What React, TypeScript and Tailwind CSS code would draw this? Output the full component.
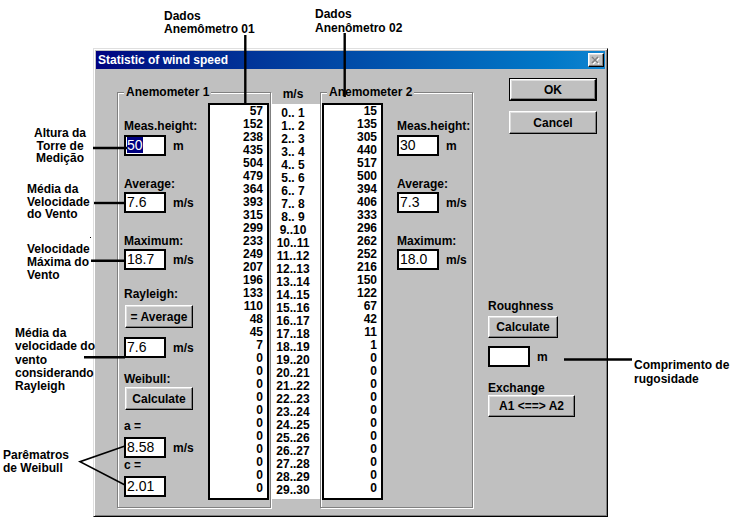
import React from 'react'

const A1 = [57, 152, 238, 435, 504, 479, 364, 393, 315, 299, 233, 249, 207, 196, 133, 110, 48, 45, 7, 0, 0, 0, 0, 0, 0, 0, 0, 0, 0, 0]
const A2 = [15, 135, 305, 440, 517, 500, 394, 406, 333, 296, 262, 252, 216, 150, 122, 67, 42, 11, 1, 0, 0, 0, 0, 0, 0, 0, 0, 0, 0, 0]
const BINS = Array.from({ length: 30 }, (_, i) => (i < 9 ? `${i}.. ${i + 1}` : `${i}..${i + 1}`))

const raised =
  'border border-t-white border-l-white border-r-black border-b-black bg-[#c0c0c0] shadow-[inset_-1px_-1px_0_#808080,inset_1px_1px_0_#dfdfdf]'

function Btn({ className, children }: { className: string; children: React.ReactNode }) {
  return <div className={`${raised} flex items-center justify-center leading-[14px] ${className}`}>{children}</div>
}

function Field({ value, selected }: { value: string; selected?: boolean }) {
  return (
    <div className="h-[21px] w-[42px] border-2 border-black bg-white pl-[1px] pt-[1px] text-[14px] font-normal leading-[14px]">
      {selected ? <span className="bg-[#000080] text-white">{value}</span> : value}
    </div>
  )
}

function FieldRow({ className, value, unit, selected }: { className: string; value: string; unit?: string; selected?: boolean }) {
  return (
    <div className={`flex items-center gap-[7px] ${className}`}>
      <Field value={value} selected={selected} />
      {unit && <span className="leading-[14px]">{unit}</span>}
    </div>
  )
}

function ListBox({ values }: { values: number[] }) {
  return (
    <div className="h-[397px] w-[61px] border-2 border-black bg-white pr-[4px] text-right">
      {values.map((v, i) => (
        <div key={i} className="h-[13px] leading-[13px]">
          {v}
        </div>
      ))}
    </div>
  )
}

function Group({ title, className, children }: { title: string; className: string; children: React.ReactNode }) {
  return (
    <div className={`relative flex h-[416px] border border-[#808080] shadow-[inset_1px_1px_0_#fff,1px_1px_0_#fff] ${className}`}>
      <span className="absolute -top-[8px] left-[6px] bg-[#c0c0c0] px-[2px] leading-[14px]">{title}</span>
      {children}
    </div>
  )
}

function Note({ className, children }: { className: string; children: React.ReactNode }) {
  return <div className={`absolute whitespace-pre font-bold text-black ${className}`}>{children}</div>
}

export default function App() {
  return (
    <div className="relative h-[521px] w-[739px] overflow-hidden bg-white pl-[93px] pt-[48px] font-['Liberation_Sans',Arial,sans-serif] text-[12px] font-bold text-black">
      {/* dialog window */}
      <div className="h-[469px] w-[515px] border border-t-[#dfdfdf] border-l-[#dfdfdf] border-r-black border-b-black bg-[#c0c0c0] p-[2px] shadow-[inset_1px_1px_0_#fff,inset_-1px_-1px_0_#808080]">
        <div className="flex h-[18px] items-center justify-between bg-linear-to-r from-[#000080] to-[#1084d0] pl-[2px] pr-[1px]">
          <span className="text-white">Statistic of wind speed</span>
          <div className={`${raised} flex h-[14px] w-[16px] items-center justify-center`}>
            <svg width="10" height="9" viewBox="0 0 10 9">
              <path d="M2 2 L8 8 M8 2 L2 8" stroke="#fff" strokeWidth="1.6" />
              <path d="M1 1 L7 7 M7 1 L1 7" stroke="#808080" strokeWidth="1.6" />
            </svg>
          </div>
        </div>

        <div className="flex h-[446px]">
          <div className="pl-[21px] pt-[23px]">
            <Group title="Anemometer 1" className="w-[154px]">
              <div className="flex-1 pl-[6px]">
                <div className="mt-[26px] leading-[14px]">Meas.height:</div>
                <FieldRow className="mt-[2px]" value="50" unit="m" selected />
                <div className="mt-[21px] leading-[14px]">Average:</div>
                <FieldRow className="mt-[1px]" value="7.6" unit="m/s" />
                <div className="mt-[21px] leading-[14px]">Maximum:</div>
                <FieldRow className="mt-[1px]" value="18.7" unit="m/s" />
                <div className="mt-[17px] leading-[14px]">Rayleigh:</div>
                <Btn className="ml-[1px] mt-[4px] h-[23px] w-[68px]">= Average</Btn>
                <FieldRow className="mt-[9px]" value="7.6" unit="m/s" />
                <div className="mt-[14px] leading-[14px]">Weibull:</div>
                <Btn className="ml-[1px] mt-[1px] h-[23px] w-[68px]">Calculate</Btn>
                <div className="mt-[9px] leading-[14px]">a =</div>
                <FieldRow className="mt-[4px]" value="8.58" unit="m/s" />
                <div className="leading-[14px]">c =</div>
                <FieldRow className="mt-[4px]" value="2.01" />
              </div>
              <div className="mr-[1px] mt-[10px]">
                <ListBox values={A1} />
              </div>
            </Group>
          </div>

          <div className="mt-[18px] w-[49px]">
            <div className="h-[17px] pr-[5px] text-center leading-[14px]">m/s</div>
            <div className="h-[395px] bg-white pr-[5px] pt-[3px] text-center">
              {BINS.map((b) => (
                <div key={b} className="h-[13px] leading-[13px]">
                  {b}
                </div>
              ))}
            </div>
          </div>

          <div className="pt-[23px]">
            <Group title="Anemometer 2" className="w-[153px]">
              <div className="ml-[1px] mt-[10px]">
                <ListBox values={A2} />
              </div>
              <div className="flex-1 pl-[14px]">
                <div className="mt-[26px] leading-[14px]">Meas.height:</div>
                <FieldRow className="mt-[2px]" value="30" unit="m" />
                <div className="mt-[21px] leading-[14px]">Average:</div>
                <FieldRow className="mt-[1px]" value="7.3" unit="m/s" />
                <div className="mt-[21px] leading-[14px]">Maximum:</div>
                <FieldRow className="mt-[1px]" value="18.0" unit="m/s" />
              </div>
            </Group>
          </div>

          <div className="flex-1 pl-[15px] pt-[9px]">
            <div className="ml-[21px] h-[23px] w-[88px] border border-black">
              <Btn className="h-full w-full">OK</Btn>
            </div>
            <Btn className="ml-[21px] mt-[10px] h-[23px] w-[88px]">Cancel</Btn>
            <div className="mt-[165px] leading-[14px]">Roughness</div>
            <Btn className="mt-[3px] h-[22px] w-[70px]">Calculate</Btn>
            <FieldRow className="mt-[8px]" value="" unit="m" />
            <div className="mt-[14px] leading-[14px]">Exchange</div>
            <Btn className="h-[22px] w-[87px]">A1 &lt;==&gt; A2</Btn>
          </div>
        </div>
      </div>

      {/* annotations */}
      <Note className="left-[164px] top-[10px] leading-[13px]">{'Dados\nAnemômetro 01'}</Note>
      <Note className="left-[315px] top-[7px] leading-[14px]">{'Dados\nAnenômetro 02'}</Note>
      <Note className="left-[20px] top-[127px] w-[80px] text-center leading-[12.5px]">{'Altura da\nTorre de\nMedição'}</Note>
      <Note className="left-[27px] top-[183px] leading-[12.5px]">{'Média da\nVelocidade\ndo Vento'}</Note>
      <Note className="left-[27px] top-[243px] leading-[13px]">{'Velocidade\nMáxima do\nVento'}</Note>
      <Note className="left-[15px] top-[327px] leading-[13.3px]">{'Média da\nvelocidade do\nvento\nconsiderando\nRayleigh'}</Note>
      <Note className="left-[3px] top-[449px] leading-[12.5px]">{'Parêmatros\nde Weibull'}</Note>
      <Note className="left-[634px] top-[358px] leading-[14px]">{'Comprimento de\nrugosidade'}</Note>

      <svg className="pointer-events-none absolute left-0 top-0" width="739" height="521">
        <g stroke="#000" strokeWidth="2.4" fill="none">
          <line x1="245.3" y1="35" x2="245.3" y2="104" />
          <line x1="344.7" y1="33" x2="344.7" y2="97" />
          <line x1="93" y1="148" x2="127" y2="148" />
          <line x1="94" y1="203" x2="125" y2="203" />
          <line x1="91" y1="260.7" x2="124" y2="260.7" />
          <line x1="84" y1="357.3" x2="125" y2="357.3" />
          <line x1="564" y1="359.5" x2="632" y2="359.5" />
        </g>
        <g stroke="#000" strokeWidth="1.6" fill="none">
          <polyline points="125,446 80,461.7 125,485" />
        </g>
        <rect x="90" y="237" width="1" height="1" fill="#000" />
      </svg>
    </div>
  )
}
